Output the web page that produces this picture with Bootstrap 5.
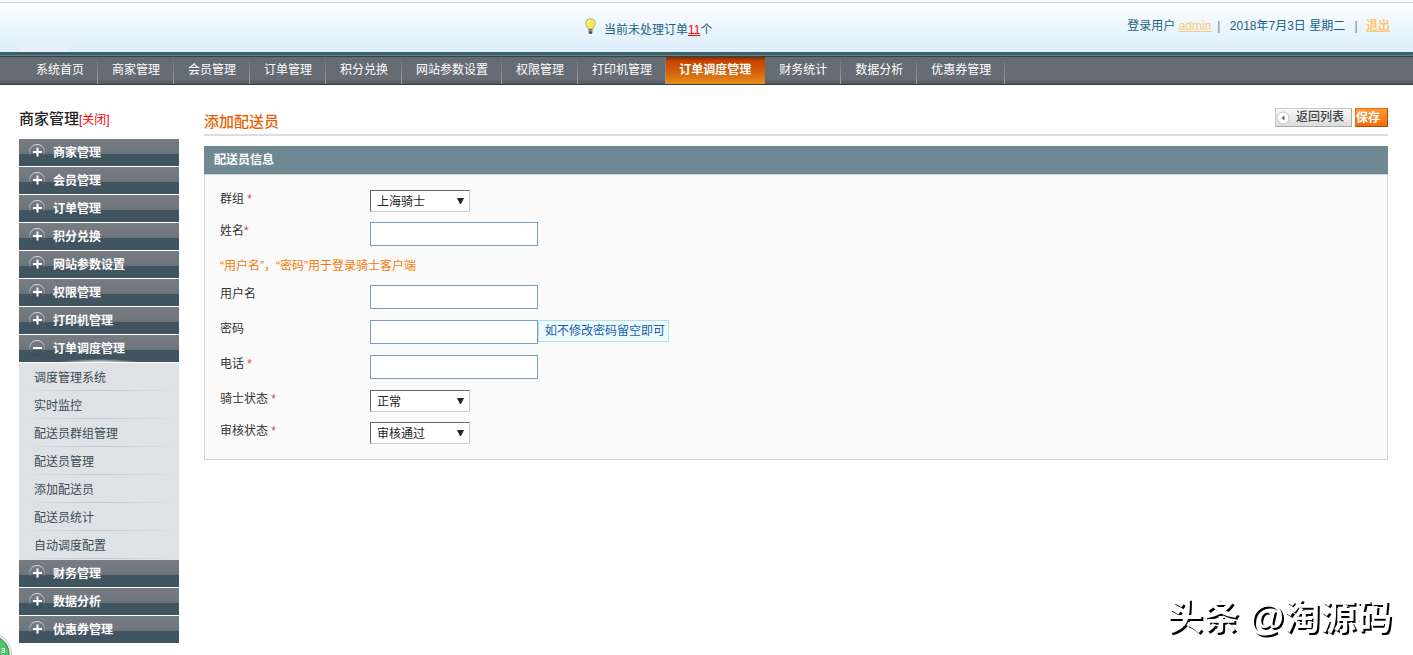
<!DOCTYPE html>
<html lang="zh-CN">
<head>
<meta charset="utf-8">
<meta name="viewport" content="width=device-width, initial-scale=1">
<title>添加配送员</title>
<link href="https://cdn.jsdelivr.net/npm/bootstrap@5.3.0/dist/css/bootstrap.min.css" rel="stylesheet">
<style>
body{font:12px/16px "Liberation Sans","Noto Sans CJK SC",sans-serif;color:#333;background:#fff}
.topbar{height:50px;margin-top:2px;border-top:1px solid #c8cccf;color:#1a6285;
 background:linear-gradient(#f3f2fa00,#f3f2fa) 19px 42px/49px 8px no-repeat,linear-gradient(#fcfeff,#dceefb);padding-right:23px}
.notice{margin-left:41%;padding:11px 0 0 15px}
.notice a{color:#f00}
.notice svg{margin-top:4px}
.userbox{padding-top:15px}
.userbox a{color:#fdc873}
.userbox i{font-style:normal;color:#777;margin:0 6px}
.userbox i:last-of-type{margin-right:5px}
.rule3{height:5px;background:linear-gradient(#3f5f68 3px,#66828c 3px 4px,#2c434e 4px)}
.mainnav{background:linear-gradient(#666c73 22px,#54585a);border-bottom:1px solid #2c434e;padding-left:22px}
.mainnav a{display:block;height:27px;padding:0 13px 0 14px;line-height:27px;color:#fff;text-decoration:none;
 border-right:1px solid;border-image:linear-gradient(#666c73,#a0a4a8) 1}
.mainnav a.on{background:linear-gradient(#7c3000,#c84400 4px,#d35a08 13px,#e88c1c);border:0;padding:0 14px 0 13px;font-weight:bold}
.pagebody{padding:23px 25px 0 19px;gap:25px}
.side{width:160px;flex:none}
.side h1{font-size:15px;line-height:22px;margin:0 0 8px;font-weight:500;color:#222}
.side h1 a{font-size:12px;font-weight:normal;color:#f00;text-decoration:none}
.fold{display:flex;align-items:center;width:100%;height:27px;margin-bottom:1px;padding:0 0 0 9px;gap:7px;border:0;color:#fff;font-weight:bold;text-align:left;
 background:linear-gradient(#777c82,#70767c 13px,#66757b 13px 15px,#41545f 15px,#3f5560)}
.fold svg{flex:none;margin-bottom:1px}
.fold.open{background:radial-gradient(ellipse 40px 3px at 50% 100%,#e4e8ea,#e4e8ea00),linear-gradient(#777c82,#70767c 13px,#66757b 13px 15px,#41545f 15px,#3f5560)}
.sub{background:#dee2e5;padding-bottom:1px}
.sub a{display:block;height:28px;line-height:30px;padding-left:15px;color:#3a4a52;text-decoration:none;border-bottom:1px solid;border-image:linear-gradient(90deg,#dee2e5,#c6c9cc 50%,#dee2e5) 1}
.titlebar{height:28px;border-bottom:2px solid #ddd}
.titlebar h2{font-size:15px;line-height:22px;margin:3px 0 0;font-weight:500;color:#eb5e00}
.tool{height:19px;font-size:12px;line-height:15px;padding:0;border:1px solid;font-weight:500}
.back{width:77px;color:#444;background:linear-gradient(#f8f8f8,#dcdcdc);border-color:#c8c8c8 #aaa #aaa #c8c8c8;gap:6px}
.save{width:33px;color:#fff;font-weight:bold;text-align:left;background:linear-gradient(#ff9a38,#f46c08);border-color:#ea7010 #a94a08 #a94a08 #ea7010;padding-top:1px}
.toolset{gap:3px}
.panelhead{margin:10px 0 0;height:28px;padding-left:10px;font-size:12px;line-height:28px;font-weight:bold;color:#fff;background:#6f8992}
.panelbox{background:#fafafa;border:1px solid #d3d3d3;padding:15px 15px 5px}
.line{display:flex;align-items:flex-start;min-height:35px}
.line.short{min-height:32px}
.line.note{min-height:28px;color:#f17b0b;padding-top:1px}
.line>label{width:150px;flex:none;padding-top:1px}
.line label b{color:#d8434a;font-weight:normal}
.line input{width:168px;height:24px;border:1px solid #7f9db9;background:#fff;padding:2px 4px}
.line select{width:100px;height:22px;appearance:none;border:1px solid;border-color:#666 #ccc #ccc #666;border-radius:0;background:#fff;padding:3px 6px 0;color:#222;line-height:17px}
.pick{position:relative}
.pick svg{position:absolute;right:6px;top:8px;pointer-events:none}
.hint{height:22px;padding:0 3px 0 6px;line-height:20px;border:1px solid #b0e0f5;background:#f0faff;color:#0e5fae}
.brandmark{position:fixed;right:21px;bottom:12px;font-size:36px;line-height:50px;font-weight:bold;color:#fff;text-shadow:2px 2px 0 #000}
.bubble{position:fixed;left:0;bottom:0}
</style>
</head>
<body>
<header>
 <div class="topbar d-flex">
  <div class="notice d-flex">
   <svg width="11" height="17" viewBox="0 0 12 18" preserveAspectRatio="none" class="me-2"><path d="M6 .7C2.700.7.8 3 .8 5.600c0 2.200 2 3.200 2.700 6.200h5c.7-3 2.700-4 2.700-6.200C11.200 3 9.300.7 6 .7z" fill="#f4ec4c" stroke="#aaa27a"/><path d="M3 5q.4-2 2.500-2.500" stroke="#fff" stroke-width="1.500" fill="none"/><path d="M4 12h4v3.500L7 17H5l-1-1.500z" fill="#555"/><path d="M4 13.500h4" stroke="#bbb"/></svg>
   <span class="pt-2">当前未处理订单<a href="#">11</a>个</span>
  </div>
  <div class="userbox ms-auto">登录用户 <a href="#">admin</a><i>|</i> 2018年7月3日 星期二 <i>|</i> <a href="#" class="fw-bold">退出</a></div>
 </div>
 <div class="rule3"></div>
 <nav class="mainnav d-flex">
  <a href="#">系统首页</a><a href="#">商家管理</a><a href="#">会员管理</a><a href="#">订单管理</a><a href="#">积分兑换</a><a href="#">网站参数设置</a><a href="#">权限管理</a><a href="#">打印机管理</a><a href="#" class="on">订单调度管理</a><a href="#">财务统计</a><a href="#">数据分析</a><a href="#">优惠券管理</a>
 </nav>
</header>
<svg width="0" height="0" class="position-absolute">
 <defs><linearGradient id="ring" x1="0" y1="0" x2="0" y2="1"><stop offset="0" stop-color="#dde0e2"/><stop offset=".6" stop-color="#7d8990"/><stop offset=".8" stop-color="#3a4d57"/></linearGradient></defs>
 <symbol id="plus" viewBox="0 0 18 18"><circle cx="9" cy="9" r="7.500" fill="none" stroke="url(#ring)"/><path d="M5 9h9M9.500 4.500v9" stroke="#fff" stroke-width="2"/></symbol>
 <symbol id="minus" viewBox="0 0 18 18"><circle cx="9" cy="9" r="7.500" fill="none" stroke="url(#ring)"/><path d="M5 9h9" stroke="#fff" stroke-width="2"/></symbol>
</svg>
<div class="pagebody d-flex">
 <aside class="side">
  <h1>商家管理<a href="#">[关闭]</a></h1>
  <button class="fold"><svg width="18" height="18"><use href="#plus"/></svg>商家管理</button>
  <button class="fold"><svg width="18" height="18"><use href="#plus"/></svg>会员管理</button>
  <button class="fold"><svg width="18" height="18"><use href="#plus"/></svg>订单管理</button>
  <button class="fold"><svg width="18" height="18"><use href="#plus"/></svg>积分兑换</button>
  <button class="fold"><svg width="18" height="18"><use href="#plus"/></svg>网站参数设置</button>
  <button class="fold"><svg width="18" height="18"><use href="#plus"/></svg>权限管理</button>
  <button class="fold"><svg width="18" height="18"><use href="#plus"/></svg>打印机管理</button>
  <button class="fold open"><svg width="18" height="18"><use href="#minus"/></svg>订单调度管理</button>
  <div class="sub"><a href="#">调度管理系统</a><a href="#">实时监控</a><a href="#">配送员群组管理</a><a href="#">配送员管理</a><a href="#">添加配送员</a><a href="#">配送员统计</a><a href="#">自动调度配置</a></div>
  <button class="fold"><svg width="18" height="18"><use href="#plus"/></svg>财务管理</button>
  <button class="fold"><svg width="18" height="18"><use href="#plus"/></svg>数据分析</button>
  <button class="fold"><svg width="18" height="18"><use href="#plus"/></svg>优惠券管理</button>
 </aside>
 <main class="flex-grow-1">
  <div class="titlebar d-flex justify-content-between">
   <h2>添加配送员</h2>
   <div class="toolset d-flex">
    <button class="tool back d-flex align-items-center"><svg width="14" height="14" viewBox="0 0 14 14"><circle cx="7" cy="7" r="6" fill="#fff" stroke="#c4c4c4"/><path d="M8.500 4.500v5L5.500 7z" fill="#666"/></svg>返回列表</button>
    <button class="tool save">保存</button>
   </div>
  </div>
  <h3 class="panelhead">配送员信息</h3>
  <form class="panelbox">
   <div class="line short"><label for="grp">群组 <b>*</b></label><div class="pick"><select id="grp"><option>上海骑士</option></select><svg width="7" height="7"><path d="M0 0h7L4 6H3z" fill="#222"/></svg></div></div>
   <div class="line"><label for="nm">姓名<b>*</b></label><input id="nm"></div>
   <div class="line note">“用户名”，“密码”用于登录骑士客户端</div>
   <div class="line"><label for="usr">用户名</label><input id="usr"></div>
   <div class="line"><label for="pw">密码</label><input id="pw" type="password"><span class="hint">如不修改密码留空即可</span></div>
   <div class="line"><label for="tel">电话 <b>*</b></label><input id="tel"></div>
   <div class="line short"><label for="st">骑士状态 <b>*</b></label><div class="pick"><select id="st"><option>正常</option></select><svg width="7" height="7"><path d="M0 0h7L4 6H3z" fill="#222"/></svg></div></div>
   <div class="line short"><label for="au">审核状态 <b>*</b></label><div class="pick"><select id="au"><option>审核通过</option></select><svg width="7" height="7"><path d="M0 0h7L4 6H3z" fill="#222"/></svg></div></div>
  </form>
 </main>
</div>
<div class="brandmark">头条 @淘源码</div>
<svg class="bubble" width="16" height="24" viewBox="0 0 16 24"><circle cx="-9" cy="23" r="21" fill="#ccc"/><circle cx="-9" cy="23" r="20" fill="#f4f4f4"/><circle cx="-9" cy="23" r="18" fill="#4cc56c" stroke="#1c8a3c"/><text x="1" y="22" font-size="8" font-weight="bold" fill="#fff">3</text></svg>
<script src="https://cdn.jsdelivr.net/npm/bootstrap@5.3.0/dist/js/bootstrap.bundle.min.js"></script>
</body>
</html>
